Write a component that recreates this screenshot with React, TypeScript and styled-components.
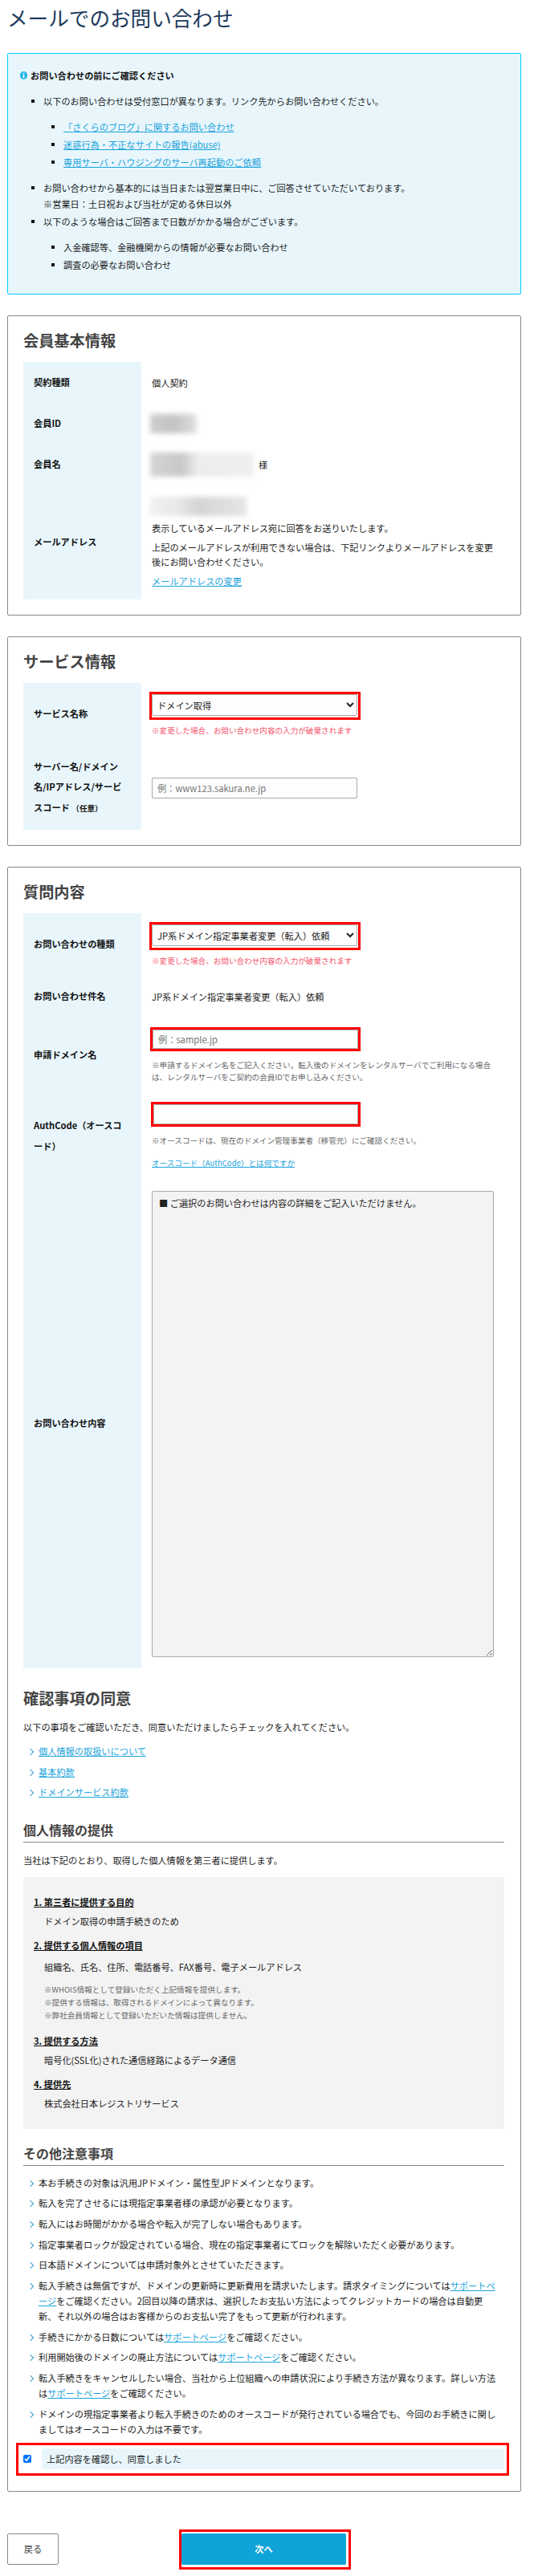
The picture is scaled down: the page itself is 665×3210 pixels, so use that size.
import React from "react";
import styled, { createGlobalStyle } from "styled-components";

const GlobalStyle = createGlobalStyle`
  * { box-sizing: border-box; }
  html, body { margin: 0; padding: 0; background: #fff; }
  body {
    font-family: "Noto Sans CJK JP", "Noto Sans", sans-serif;
    font-size: 11.2px;
    line-height: 20px;
    color: #222;
  }
  h1, h2, h3, p, ul, ol { margin: 0; padding: 0; }
  ul { list-style: none; }
`;

const Page = styled.div`
  width: 640px;
  margin-left: 9px;
  padding-bottom: 24px;
`;

const Title = styled.h1`
  font-size: 25.6px;
  line-height: 44px;
  font-weight: 400;
  color: #1d3a5c;
`;

const A = styled.a`
  color: #1aa3dc;
  text-decoration: underline;
`;

const InfoBox = styled.section`
  margin-top: 22px;
  padding: 17px 20px 14px 15px;
  background: #e8f6fc;
  border: 1px solid #00ccff;
  border-radius: 2px;
`;

const InfoHead = styled.p`
  display: flex;
  align-items: center;
  gap: 4px;
  font-weight: 700;
  color: #111;
  margin-bottom: 12px;
`;

const SquareList = styled.ul<{ $nested?: boolean }>`
  padding-left: ${(p) => (p.$nested ? 25 : 29)}px;
  margin: ${(p) => (p.$nested ? "12px 0" : "0")};
`;

const SquareItem = styled.li`
  position: relative;
  margin-bottom: 2px;
  &::before {
    content: "";
    position: absolute;
    left: -15px;
    top: 8px;
    width: 4px;
    height: 4px;
    background: #111;
  }
`;

const Card = styled.section`
  margin-top: 26px;
  padding: 14px 20px 19px 19px;
  border: 1px solid #888;
  border-radius: 2px;
`;

const Heading = styled.h2<{ $top?: number }>`
  font-size: 19.2px;
  line-height: 32px;
  font-weight: 700;
  color: #444;
  margin-top: ${(p) => p.$top ?? 0}px;
  margin-bottom: ${(p) => (p.$top ? 10 : 11)}px;
`;

const SubHeading = styled.h3`
  margin-top: 17px;
  margin-bottom: 12px;
  padding-bottom: 2px;
  font-size: 16px;
  line-height: 26px;
  font-weight: 700;
  color: #444;
  border-bottom: 1px solid #888;
`;

const Table = styled.table`
  width: 100%;
  border-collapse: collapse;
  table-layout: fixed;
`;

const Row = styled.tr<{ $h: number }>`
  height: ${(p) => p.$h}px;
`;

const Th = styled.th`
  width: 147px;
  padding: 0 20px 0 13px;
  background: #e8f6fc;
  text-align: left;
  font-weight: 700;
  color: #111;
  line-height: 25.6px;
`;

const Optional = styled.small`
  font-size: 9.6px;
`;

const Td = styled.td`
  padding: 0 13px;
  vertical-align: middle;
`;

const Blurred = styled.div<{ $w: number; $h: number; $bg: string }>`
  width: ${(p) => p.$w}px;
  height: ${(p) => p.$h}px;
  margin-left: -2px;
  background: ${(p) => p.$bg};
  filter: blur(3px);
`;

const NameLine = styled.div`
  display: flex;
  align-items: center;
  gap: 3px;
`;

const MailText = styled.p`
  line-height: 18px;
  margin-top: 6px;
`;

const Frame = styled.div<{ $left: number; $pad?: string }>`
  width: fit-content;
  margin-left: -${(p) => p.$left}px;
  border: 3px solid #f00;
  padding: ${(p) => p.$pad ?? "0"};
  background: #fff;
`;

const Select = styled.select`
  display: block;
  width: 256px;
  height: 27px;
  padding: 0 2px;
  font: inherit;
  color: #222;
  background: #fdfdfd;
  border: 1px solid #aaa;
  border-radius: 2px;
`;

const Input = styled.input<{ $w?: number; $h?: number }>`
  display: block;
  width: ${(p) => p.$w ?? 256}px;
  height: ${(p) => p.$h ?? 26}px;
  padding: 0 6px;
  font: inherit;
  color: #222;
  background: #fdfdfd;
  border: 1px solid #aaa;
  border-radius: 1px;
  &::placeholder { color: #777; opacity: 1; }
`;

const Warn = styled.p`
  margin-top: 5px;
  line-height: 16px;
  font-size: 9.6px;
  color: #f5566c;
`;

const Note = styled.p<{ $top: number }>`
  margin-top: ${(p) => p.$top}px;
  line-height: 15px;
  font-size: 9.6px;
  color: #666;
`;

const LinkLine = styled.p`
  margin-top: 10px;
  font-size: 9.6px;
`;

const TextArea = styled.textarea`
  display: block;
  width: 426px;
  height: 581px;
  margin: 15px 0 14px;
  padding: 4px 8px;
  font: inherit;
  line-height: 20px;
  color: #222;
  background: #f3f3f3;
  border: 1px solid #aaa;
  border-radius: 2px;
`;

const Lead = styled.p`
  margin-bottom: 11px;
`;

const ArrowList = styled.ul``;

const ArrowItem = styled.li`
  position: relative;
  padding: 0 8px 6.4px 19px;
  line-height: 19.2px;
  &::before {
    content: "";
    position: absolute;
    left: 6px;
    top: 7px;
    width: 5px;
    height: 5px;
    border-top: 1.5px solid #3f9fd0;
    border-right: 1.5px solid #3f9fd0;
    transform: rotate(45deg);
  }
`;

const GrayBox = styled.div`
  padding: 21px 13px 22px;
  background: #f3f3f3;
  border-radius: 2px;
`;

const Term = styled.p<{ $top?: number }>`
  margin-top: ${(p) => p.$top ?? 10}px;
  font-weight: 700;
  color: #111;
  text-decoration: underline;
  &:first-child { margin-top: 0; }
`;

const Def = styled.p<{ $top?: number }>`
  margin-top: ${(p) => p.$top ?? 4}px;
  padding-left: 13px;
`;

const SmallNotes = styled.p`
  margin-top: 10px;
  padding-left: 13px;
  font-size: 9.6px;
  line-height: 16px;
  color: #666;
`;

const AgreeFrame = styled.div`
  display: flex;
  align-items: center;
  gap: 13px;
  margin: 0 -6px 0 -9px;
  padding: 4px 3px 5px 6px;
  border: 3px solid #f00;
`;

const Check = styled.input`
  width: 10px;
  height: 10px;
  margin: 0;
  flex: none;
`;

const AgreeLabel = styled.label`
  flex: 1;
  padding: 3px 6px;
  background: #e8f6fc;
  border-radius: 2px;
`;

const Buttons = styled.div`
  display: flex;
  gap: 150px;
  margin-top: 47px;
`;

const BackButton = styled.button`
  width: 64px;
  height: 39px;
  margin-top: 5px;
  font: inherit;
  color: #444;
  background: #fff;
  border: 1px solid #888;
  border-radius: 2px;
`;

const NextFrame = styled.div`
  width: 214px;
  height: 50px;
  padding: 2px 3px 3px 0;
  border: 3px solid #f00;
`;

const NextButton = styled.button`
  display: block;
  width: 205px;
  height: 39px;
  font: inherit;
  font-weight: 700;
  color: #fff;
  background: #0fa3d7;
  border: 0;
  border-radius: 2px;
`;

function InfoIcon() {
  return (
    <svg width="9" height="10" viewBox="0 0 9 10" aria-hidden="true">
      <ellipse cx="4.5" cy="5" rx="4.5" ry="5" fill="#18b4ea" />
      <rect x="3.6" y="1.6" width="1.8" height="1.6" fill="#fff" />
      <rect x="3.6" y="4" width="1.8" height="4.2" fill="#fff" />
    </svg>
  );
}

export default function App() {
  return (
    <Page>
      <GlobalStyle />
      <Title>メールでのお問い合わせ</Title>

      <InfoBox>
        <InfoHead>
          <InfoIcon />
          <span>お問い合わせの前にご確認ください</span>
        </InfoHead>
        <SquareList>
          <SquareItem>
            以下のお問い合わせは受付窓口が異なります。リンク先からお問い合わせください。
            <SquareList $nested>
              <SquareItem><A href="#">「さくらのブログ」に関するお問い合わせ</A></SquareItem>
              <SquareItem><A href="#">迷惑行為・不正なサイトの報告(abuse)</A></SquareItem>
              <SquareItem><A href="#">専用サーバ・ハウジングのサーバ再起動のご依頼</A></SquareItem>
            </SquareList>
          </SquareItem>
          <SquareItem>
            お問い合わせから基本的には当日または翌営業日中に、ご回答させていただいております。
            <br />
            ※営業日：土日祝および当社が定める休日以外
          </SquareItem>
          <SquareItem>
            以下のような場合はご回答まで日数がかかる場合がございます。
            <SquareList $nested>
              <SquareItem>入金確認等、金融機関からの情報が必要なお問い合わせ</SquareItem>
              <SquareItem>調査の必要なお問い合わせ</SquareItem>
            </SquareList>
          </SquareItem>
        </SquareList>
      </InfoBox>

      <Card>
        <Heading>会員基本情報</Heading>
        <Table>
          <tbody>
            <Row $h={51}>
              <Th>契約種類</Th>
              <Td>個人契約</Td>
            </Row>
            <Row $h={51}>
              <Th>会員ID</Th>
              <Td>
                <Blurred $w={59} $h={24} $bg="linear-gradient(90deg, #ccc, #c4c4c4 50%, #d8d8d8 90%, #f4f4f4)" />
              </Td>
            </Row>
            <Row $h={51}>
              <Th>会員名</Th>
              <Td>
                <NameLine>
                  <Blurred $w={132} $h={30} $bg="linear-gradient(90deg, #d4d4d4, #c8c8c8 30%, #ededed 45%, #eee 95%, #fff)" />
                  <span>様</span>
                </NameLine>
              </Td>
            </Row>
            <Row $h={143}>
              <Th>メールアドレス</Th>
              <Td>
                <Blurred $w={120} $h={24} $bg="linear-gradient(90deg, #f0f0f0, #e8e8e8 30%, #d4d4d4 50%, #e4e4e4 95%)" />
                <MailText>表示しているメールアドレス宛に回答をお送りいたします。</MailText>
                <MailText>
                  上記のメールアドレスが利用できない場合は、下記リンクよりメールアドレスを変更後にお問い合わせください。
                </MailText>
                <MailText><A href="#">メールアドレスの変更</A></MailText>
              </Td>
            </Row>
          </tbody>
        </Table>
      </Card>

      <Card>
        <Heading>サービス情報</Heading>
        <Table>
          <tbody>
            <Row $h={78}>
              <Th>サービス名称</Th>
              <Td>
                <Frame $left={3} $pad="0 1px 2px 0">
                  <Select defaultValue="domain">
                    <option value="domain">ドメイン取得</option>
                  </Select>
                </Frame>
                <Warn>※変更した場合、お問い合わせ内容の入力が破棄されます</Warn>
              </Td>
            </Row>
            <Row $h={105}>
              <Th>
                サーバー名/ドメイン名/IPアドレス/サービスコード <Optional>（任意）</Optional>
              </Th>
              <Td>
                <Input placeholder="例：www123.sakura.ne.jp" />
              </Td>
            </Row>
          </tbody>
        </Table>
      </Card>

      <Card>
        <Heading>質問内容</Heading>
        <Table>
          <tbody>
            <Row $h={78}>
              <Th>お問い合わせの種類</Th>
              <Td>
                <Frame $left={3} $pad="0 1px 2px 0">
                  <Select defaultValue="jp">
                    <option value="jp">JP系ドメイン指定事業者変更（転入）依頼</option>
                  </Select>
                </Frame>
                <Warn>※変更した場合、お問い合わせ内容の入力が破棄されます</Warn>
              </Td>
            </Row>
            <Row $h={51}>
              <Th>お問い合わせ件名</Th>
              <Td>JP系ドメイン指定事業者変更（転入）依頼</Td>
            </Row>
            <Row $h={96}>
              <Th>申請ドメイン名</Th>
              <Td>
                <Frame $left={2}>
                  <Input $h={24} placeholder="例：sample.jp" />
                </Frame>
                <Note $top={10}>
                  ※申請するドメイン名をご記入ください。転入後のドメインをレンタルサーバでご利用になる場合は、レンタルサーバをご契約の会員IDでお申し込みください。
                </Note>
              </Td>
            </Row>
            <Row $h={106}>
              <Th>AuthCode（オースコード）</Th>
              <Td>
                <Frame $left={1}>
                  <Input $w={255} $h={25} />
                </Frame>
                <Note $top={10}>※オースコードは、現在のドメイン管理事業者（移管元）にご確認ください。</Note>
                <LinkLine><A href="#">オースコード（AuthCode）とは何ですか</A></LinkLine>
              </Td>
            </Row>
            <Row $h={610}>
              <Th>お問い合わせ内容</Th>
              <Td>
                <TextArea disabled defaultValue="■ ご選択のお問い合わせは内容の詳細をご記入いただけません。" />
              </Td>
            </Row>
          </tbody>
        </Table>

        <Heading $top={21}>確認事項の同意</Heading>
        <Lead>以下の事項をご確認いただき、同意いただけましたらチェックを入れてください。</Lead>
        <ArrowList>
          <ArrowItem><A href="#">個人情報の取扱いについて</A></ArrowItem>
          <ArrowItem><A href="#">基本約款</A></ArrowItem>
          <ArrowItem><A href="#">ドメインサービス約款</A></ArrowItem>
        </ArrowList>

        <SubHeading>個人情報の提供</SubHeading>
        <Lead>当社は下記のとおり、取得した個人情報を第三者に提供します。</Lead>
        <GrayBox>
          <Term>1. 第三者に提供する目的</Term>
          <Def>ドメイン取得の申請手続きのため</Def>
          <Term>2. 提供する個人情報の項目</Term>
          <Def $top={7}>組織名、氏名、住所、電話番号、FAX番号、電子メールアドレス</Def>
          <SmallNotes>
            ※WHOIS情報として登録いただく上記情報を提供します。
            <br />
            ※提供する情報は、取得されるドメインによって異なります。
            <br />
            ※弊社会員情報として登録いただいた情報は提供しません。
          </SmallNotes>
          <Term $top={14}>3. 提供する方法</Term>
          <Def>暗号化(SSL化)された通信経路によるデータ通信</Def>
          <Term>4. 提供先</Term>
          <Def>株式会社日本レジストリサービス</Def>
        </GrayBox>

        <SubHeading>その他注意事項</SubHeading>
        <ArrowList>
          <ArrowItem>本お手続きの対象は汎用JPドメイン・属性型JPドメインとなります。</ArrowItem>
          <ArrowItem>転入を完了させるには現指定事業者様の承認が必要となります。</ArrowItem>
          <ArrowItem>転入にはお時間がかかる場合や転入が完了しない場合もあります。</ArrowItem>
          <ArrowItem>指定事業者ロックが設定されている場合、現在の指定事業者にてロックを解除いただく必要があります。</ArrowItem>
          <ArrowItem>日本語ドメインについては申請対象外とさせていただきます。</ArrowItem>
          <ArrowItem>
            転入手続きは無償ですが、ドメインの更新時に更新費用を請求いたします。請求タイミングについては<A href="#">サポートページ</A>をご確認ください。2回目以降の請求は、選択したお支払い方法によってクレジットカードの場合は自動更新、それ以外の場合はお客様からのお支払い完了をもって更新が行われます。
          </ArrowItem>
          <ArrowItem>手続きにかかる日数については<A href="#">サポートページ</A>をご確認ください。</ArrowItem>
          <ArrowItem>利用開始後のドメインの廃止方法については<A href="#">サポートページ</A>をご確認ください。</ArrowItem>
          <ArrowItem>
            転入手続きをキャンセルしたい場合、当社から上位組織への申請状況により手続き方法が異なります。詳しい方法は<A href="#">サポートページ</A>をご確認ください。
          </ArrowItem>
          <ArrowItem>
            ドメインの現指定事業者より転入手続きのためのオースコードが発行されている場合でも、今回のお手続きに関しましてはオースコードの入力は不要です。
          </ArrowItem>
        </ArrowList>
        <AgreeFrame>
          <Check type="checkbox" id="agree" defaultChecked />
          <AgreeLabel htmlFor="agree">上記内容を確認し、同意しました</AgreeLabel>
        </AgreeFrame>
      </Card>

      <Buttons>
        <BackButton type="button">戻る</BackButton>
        <NextFrame>
          <NextButton type="button">次へ</NextButton>
        </NextFrame>
      </Buttons>
    </Page>
  );
}
